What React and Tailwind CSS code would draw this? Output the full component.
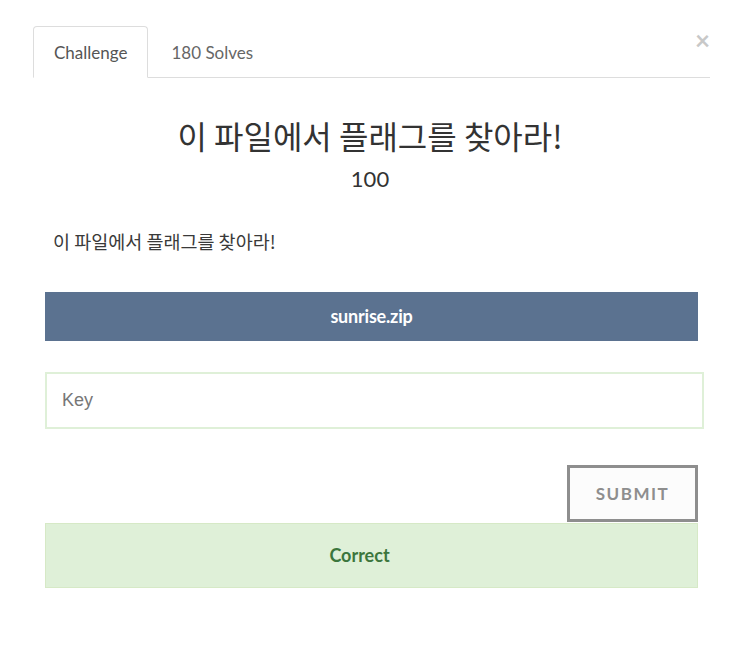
export default function App() {
  const lato = { fontFamily: 'Lato, "Noto Sans CJK KR", sans-serif' };
  return (
    <div className="w-[740px] h-[656px] bg-white relative text-[#373a3c]" style={lato}>
      <button className="absolute right-[30px] top-[27px] text-[26px] leading-none font-bold text-[#c8c8c8]">
        ×
      </button>
      <div className="pl-[33px] pr-[30px] pt-[26px]">
        <div className="flex border-b border-[#dddddd] h-[52px]">
          <div className="h-[52px] px-[20px] pt-[2px] flex items-center border border-[#dddddd] border-b-white rounded-t-[4px] bg-white text-[17px] text-[#555]">
            Challenge
          </div>
          <div className="h-[51px] px-[23px] pt-[2px] flex items-center text-[17px] text-[#666]">180 Solves</div>
        </div>
      </div>

      <div className="px-[45px] pt-[34px]">
        <div className="text-center">
          <h1
            className="text-[32px] leading-[46px] text-[#333]"
            style={{ fontFamily: '"Noto Sans CJK KR", Lato, sans-serif' }}
          >
            이 파일에서 플래그를 찾아라!
          </h1>
          <p className="text-[22px] leading-[34px] text-[#333] mt-[4px]">100</p>
        </div>
        <p
          className="pl-[8px] mt-[32px] text-[18.5px] leading-[26px] text-[#3a3a3a]"
          style={{ fontFamily: '"Noto Sans CJK KR", Lato, sans-serif' }}
        >
          이 파일에서 플래그를 찾아라!
        </p>

        <div className="mt-[38px] w-[653px] h-[49px] bg-[#5b7290] flex items-center justify-center text-white font-bold text-[18px] tracking-[-0.2px]">
          sunrise.zip
        </div>

        <div className="mt-[31px] w-[659px] h-[57px] border-2 border-[#dff0d8] flex items-center px-[15px]">
          <input
            placeholder="Key"
            className="w-full outline-none text-[18px] text-[#333] placeholder:text-[#777]"
            style={{ fontFamily: '"Liberation Sans", Arial, sans-serif' }}
          />
        </div>

        <div className="w-[653px] flex justify-end mt-[36px]">
          <button className="w-[131px] h-[57px] border-[3px] border-[#8e8e8e] bg-[#fcfcfc] text-[#8e8e8e] text-[17px] font-bold tracking-[1.5px]">
            SUBMIT
          </button>
        </div>

        <div className="mt-[1px] w-[653px] h-[65px] bg-[#dff0d8] border border-[#d6e9c6] flex items-center justify-center pr-[24px] text-[#3c763d] font-bold text-[18px]">
          Correct
        </div>
      </div>
    </div>
  );
}
